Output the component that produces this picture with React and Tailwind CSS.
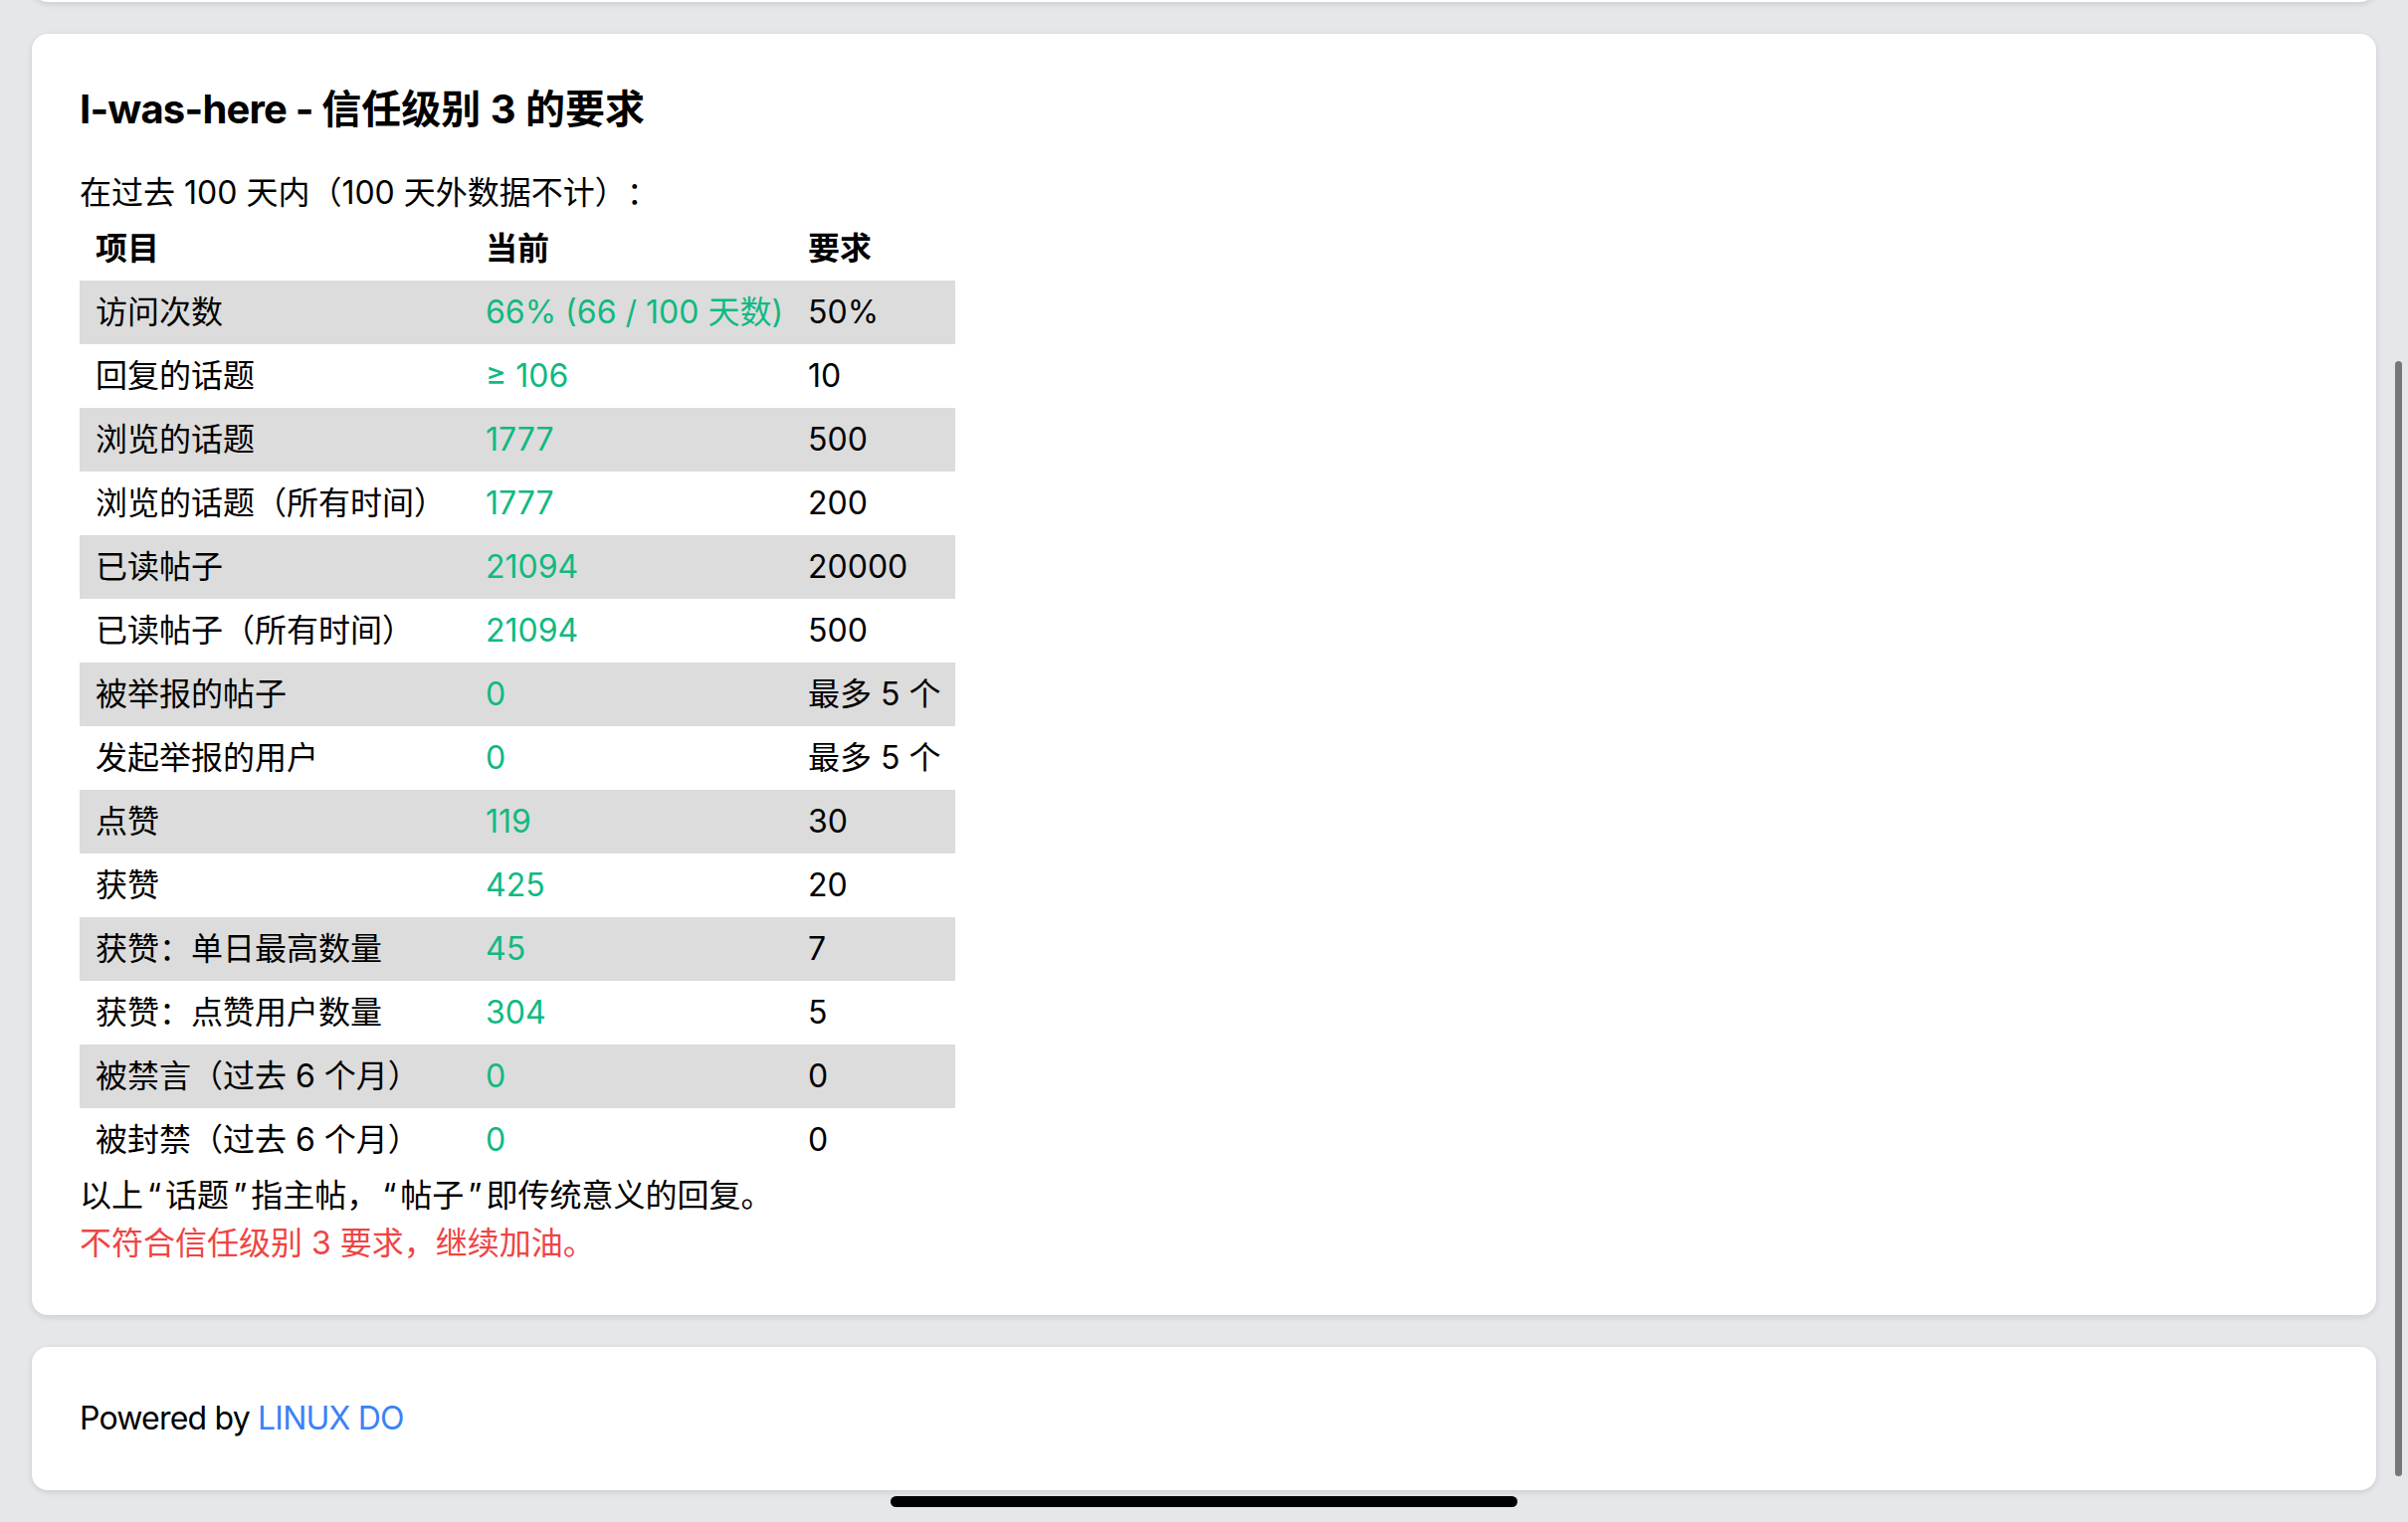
import React from "react";

const rows = [
  ["访问次数", "66% (66 / 100 天数)", "50%"],
  ["回复的话题", "≥ 106", "10"],
  ["浏览的话题", "1777", "500"],
  ["浏览的话题（所有时间）", "1777", "200"],
  ["已读帖子", "21094", "20000"],
  ["已读帖子（所有时间）", "21094", "500"],
  ["被举报的帖子", "0", "最多 5 个"],
  ["发起举报的用户", "0", "最多 5 个"],
  ["点赞", "119", "30"],
  ["获赞", "425", "20"],
  ["获赞：单日最高数量", "45", "7"],
  ["获赞：点赞用户数量", "304", "5"],
  ["被禁言（过去 6 个月）", "0", "0"],
  ["被封禁（过去 6 个月）", "0", "0"],
];

export default function App() {
  return (
    <div
      className="relative h-[1530px] w-full overflow-hidden bg-[#e5e7eb] px-[32px] text-black [text-spacing-trim:space-all]"
      style={{ fontFamily: 'Inter, "Noto Sans CJK SC", sans-serif' }}
    >
      <div className="-mt-[62px] h-[64px] rounded-[16px] bg-white shadow-[0_2px_6px_rgba(0,0,0,0.12)]" />

      <div className="mt-[32px] rounded-[16px] bg-white p-[48px] shadow-[0_2px_6px_rgba(0,0,0,0.12)]">
        <h2 className="mb-[32px] text-[40px] font-bold leading-[56px]">
          <span className="tracking-[-0.02em]">I-was-here - </span>信任级别 3 的要求
        </h2>
        <p className="text-[32px] leading-[48px]">在过去 100 天内（100 天外数据不计）：</p>
        <table className="table-fixed w-[880px] border-collapse text-left text-[32px] leading-[48px]">
          <thead>
            <tr>
              <th className="w-[392px] px-[16px] py-[8px] font-bold">项目</th>
              <th className="w-[324px] px-[16px] py-[8px] font-bold">当前</th>
              <th className="w-[164px] px-[16px] py-[8px] font-bold">要求</th>
            </tr>
          </thead>
          <tbody>
            {rows.map((r, i) => (
              <tr key={i} className={i % 2 === 0 ? "bg-[#dcdcdc]" : "bg-white"}>
                <td className="whitespace-nowrap px-[16px] py-[8px]">{r[0]}</td>
                <td className="whitespace-nowrap px-[16px] py-[8px] text-[#10b981]">{r[1]}</td>
                <td className="whitespace-nowrap px-[16px] py-[8px]">{r[2]}</td>
              </tr>
            ))}
          </tbody>
        </table>
        <p className="text-[32px] leading-[48px]">
          以上<span className="mx-[4px]">“</span>话题<span className="mx-[4px]">”</span>指主帖，<span className="mx-[4px]">“</span>帖子<span className="mx-[4px]">”</span>即传统意义的回复。
        </p>
        <p className="text-[32px] leading-[48px] text-[#ef4444]">不符合信任级别 3 要求，继续加油。</p>
      </div>

      <div className="mt-[32px] rounded-[16px] bg-white p-[48px] shadow-[0_2px_6px_rgba(0,0,0,0.12)]">
        <p className="text-[32px] leading-[48px] tracking-[-0.025em]">
          Powered by <a className="text-[#3b82f6]">LINUX DO</a>
        </p>
      </div>

      <div className="absolute right-[6px] top-[363px] h-[1121px] w-[7px] rounded-full bg-[#777777]" />
      <div className="absolute bottom-[15px] left-1/2 h-[11px] w-[630px] -translate-x-1/2 rounded-full bg-black" />
    </div>
  );
}
